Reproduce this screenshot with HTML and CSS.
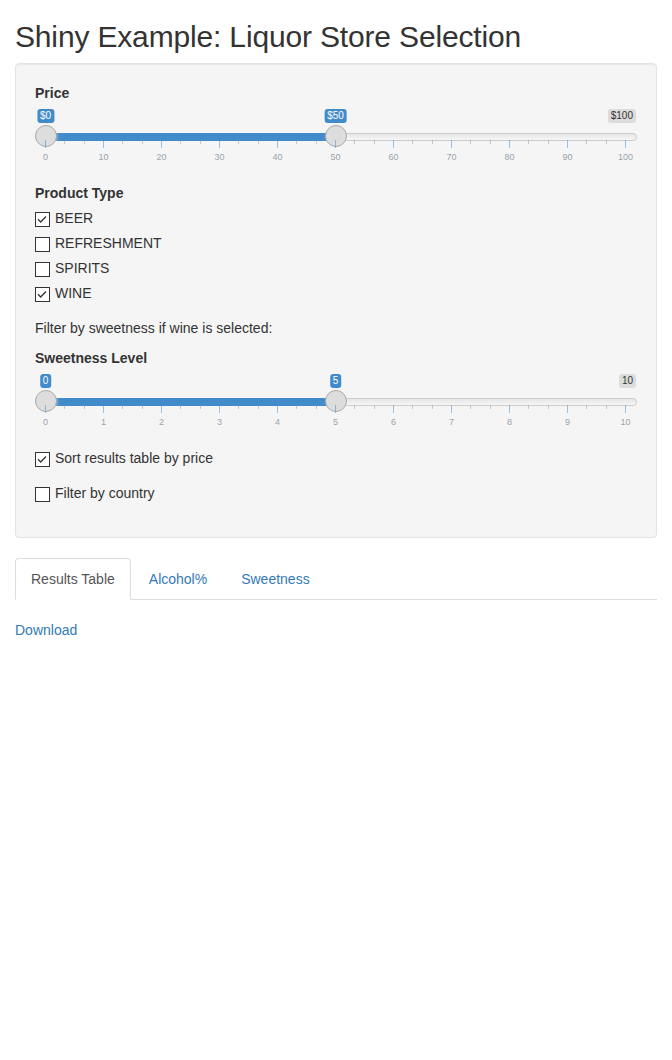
FILE: index.html
```html
<!DOCTYPE html>
<html>
<head>
<meta charset="utf-8">
<title>Shiny Example: Liquor Store Selection</title>
<link rel="stylesheet" href="styles.css">
</head>
<body>
<div class="container">
  <h2 class="title">Shiny Example: Liquor Store Selection</h2>

  <div class="well">
    <div class="form-group">
      <label class="control-label">Price</label>
      <div class="irs">
        <span class="irs-line"></span>
        <span class="irs-bar" style="width: calc((100% - 22px) * 0.5)"></span>
        <span class="irs-handle" style="left: 0"></span>
        <span class="irs-handle" style="left: calc((100% - 22px) * 0.5)"></span>
        <span class="irs-tag" style="left: calc(10.5px + (100% - 22px) * 0)">$0</span>
        <span class="irs-tag" style="left: calc(10.5px + (100% - 22px) * 0.5)">$50</span>
        <span class="irs-tag irs-max">$100</span>
        <div class="irs-grid">
          <div class="ticks">
            <i class="tick"></i><i class="tick s"></i><i class="tick s"></i>
            <i class="tick"></i><i class="tick s"></i><i class="tick s"></i>
            <i class="tick"></i><i class="tick s"></i><i class="tick s"></i>
            <i class="tick"></i><i class="tick s"></i><i class="tick s"></i>
            <i class="tick"></i><i class="tick s"></i><i class="tick s"></i>
            <i class="tick"></i><i class="tick s"></i><i class="tick s"></i>
            <i class="tick"></i><i class="tick s"></i><i class="tick s"></i>
            <i class="tick"></i><i class="tick s"></i><i class="tick s"></i>
            <i class="tick"></i><i class="tick s"></i><i class="tick s"></i>
            <i class="tick"></i><i class="tick s"></i><i class="tick s"></i>
            <i class="tick"></i>
          </div>
          <div class="nums">
            <span>0</span><span>10</span><span>20</span><span>30</span><span>40</span><span>50</span><span>60</span><span>70</span><span>80</span><span>90</span><span>100</span>
          </div>
        </div>
      </div>
    </div>

    <div class="form-group">
      <label class="control-label">Product Type</label>
      <div class="options">
        <div class="checkbox"><label><span class="box"><svg viewBox="0 0 13 13" width="13" height="13"><path d="M2 6.3 4.7 9 10 3.5"/></svg></span>BEER</label></div>
        <div class="checkbox"><label><span class="box"></span>REFRESHMENT</label></div>
        <div class="checkbox"><label><span class="box"></span>SPIRITS</label></div>
        <div class="checkbox"><label><span class="box"><svg viewBox="0 0 13 13" width="13" height="13"><path d="M2 6.3 4.7 9 10 3.5"/></svg></span>WINE</label></div>
      </div>
    </div>

    <div class="conditional">
      <p>Filter by sweetness if wine is selected:</p>
      <div class="form-group">
        <label class="control-label">Sweetness Level</label>
        <div class="irs">
          <span class="irs-line"></span>
          <span class="irs-bar" style="width: calc((100% - 22px) * 0.5)"></span>
          <span class="irs-handle" style="left: 0"></span>
          <span class="irs-handle" style="left: calc((100% - 22px) * 0.5)"></span>
          <span class="irs-tag" style="left: calc(10.5px + (100% - 22px) * 0)">0</span>
          <span class="irs-tag" style="left: calc(10.5px + (100% - 22px) * 0.5)">5</span>
          <span class="irs-tag irs-max">10</span>
          <div class="irs-grid">
            <div class="ticks">
              <i class="tick"></i><i class="tick s"></i><i class="tick s"></i>
              <i class="tick"></i><i class="tick s"></i><i class="tick s"></i>
              <i class="tick"></i><i class="tick s"></i><i class="tick s"></i>
              <i class="tick"></i><i class="tick s"></i><i class="tick s"></i>
              <i class="tick"></i><i class="tick s"></i><i class="tick s"></i>
              <i class="tick"></i><i class="tick s"></i><i class="tick s"></i>
              <i class="tick"></i><i class="tick s"></i><i class="tick s"></i>
              <i class="tick"></i><i class="tick s"></i><i class="tick s"></i>
              <i class="tick"></i><i class="tick s"></i><i class="tick s"></i>
              <i class="tick"></i><i class="tick s"></i><i class="tick s"></i>
              <i class="tick"></i>
            </div>
            <div class="nums">
              <span>0</span><span>1</span><span>2</span><span>3</span><span>4</span><span>5</span><span>6</span><span>7</span><span>8</span><span>9</span><span>10</span>
            </div>
          </div>
        </div>
      </div>
    </div>

    <div class="form-group">
      <div class="checkbox"><label><span class="box"><svg viewBox="0 0 13 13" width="13" height="13"><path d="M2 6.3 4.7 9 10 3.5"/></svg></span>Sort results table by price</label></div>
    </div>

    <div class="form-group">
      <div class="checkbox"><label><span class="box"></span>Filter by country</label></div>
    </div>
  </div>

  <ul class="nav-tabs">
    <li class="active"><a href="#">Results Table</a></li>
    <li><a href="#">Alcohol%</a></li>
    <li><a href="#">Sweetness</a></li>
  </ul>

  <div class="tab-content">
    <a class="download" href="#">Download</a>
  </div>
</div>
</body>
</html>
```

FILE: styles.css
```css
html, body {
  margin: 0;
  padding: 0;
  background: #fff;
}

body {
  font-family: "Liberation Sans", Arial, Helvetica, sans-serif;
  font-size: 14px;
  line-height: 20px;
  color: #333;
}

.container {
  padding: 0 15px;
}

.title {
  font-size: 30px;
  font-weight: 500;
  line-height: 1.1;
  margin: 20px 0 10px;
  color: #333;
  letter-spacing: -0.16px;
}

.well {
  margin-bottom: 20px;
  padding: 19px;
  background: #f5f5f5;
  border: 1px solid #e3e3e3;
  border-radius: 4px;
  box-shadow: inset 0 1px 1px rgba(0, 0, 0, 0.05);
}

.form-group {
  margin-bottom: 15px;
}

.control-label {
  display: block;
  font-weight: bold;
  margin-bottom: 5px;
}

p {
  margin: 0 0 10px;
}

/* checkboxes */
.checkbox {
  position: relative;
  margin: 10px 0;
}

.checkbox + .checkbox {
  margin-top: -5px;
}

.options .checkbox:first-child {
  margin-top: 0;
}

.checkbox label {
  display: block;
  position: relative;
  min-height: 20px;
  padding-left: 20px;
  font-weight: normal;
}

.box {
  position: absolute;
  left: 0;
  top: 4px;
  width: 15px;
  height: 15px;
  box-sizing: border-box;
  border: 1px solid #333;
  background: #fff;
}

.box svg {
  display: block;
}

.box path {
  fill: none;
  stroke: #333;
  stroke-width: 1.3;
}

/* range slider */
.irs {
  position: relative;
  height: 60px;
  font-family: "Liberation Sans", Arial, sans-serif;
}

.irs-line {
  position: absolute;
  left: 0;
  right: 0;
  top: 25px;
  height: 8px;
  box-sizing: border-box;
  border: 1px solid #ccc;
  border-radius: 16px;
  background: linear-gradient(to bottom, #ddd -50%, #fff 150%);
}

.irs-bar {
  position: absolute;
  left: 11px;
  top: 25px;
  height: 8px;
  background: #428bca;
}

.irs-handle {
  position: absolute;
  top: 17px;
  width: 22px;
  height: 22px;
  box-sizing: border-box;
  border: 1px solid #aaa;
  background: #ddd;
  border-radius: 50%;
  box-shadow: 1px 1px 3px rgba(255, 255, 255, 0.3);
}

.irs-tag {
  position: absolute;
  top: 1px;
  font-size: 10px;
  line-height: 12px;
  padding: 1px 3px;
  border-radius: 3px;
  transform: translateX(-50%);
  color: #fff;
  background: #428bca;
  white-space: nowrap;
}

.irs-tag.irs-max {
  left: auto;
  right: 1px;
  transform: none;
  color: #333;
  background: rgba(0, 0, 0, 0.1);
}

.irs-grid {
  position: absolute;
  top: 32px;
  left: 10px;
  right: 11px;
}

.ticks {
  display: flex;
  justify-content: space-between;
  align-items: flex-start;
  height: 8px;
}

.tick {
  display: block;
  width: 1px;
  height: 8px;
  background: #428bca;
  opacity: 0.5;
}

.tick.s {
  height: 4px;
  background: #999;
}

.nums {
  display: flex;
  justify-content: space-between;
  margin-top: 5px;
  font-size: 9px;
  line-height: 9px;
  color: #99a4ac;
}

.nums span {
  width: 1px;
  display: flex;
  justify-content: center;
  white-space: nowrap;
}

/* tabs */
.nav-tabs {
  display: flex;
  margin: 0;
  padding: 0;
  list-style: none;
  border-bottom: 1px solid #ddd;
}

.nav-tabs li {
  margin-bottom: -1px;
}

.nav-tabs a {
  display: block;
  padding: 10px 15px;
  line-height: 20px;
  margin-right: 2px;
  border: 1px solid transparent;
  border-radius: 4px 4px 0 0;
  color: #337ab7;
  text-decoration: none;
}

.nav-tabs li.active a {
  color: #555;
  background: #fff;
  border-color: #ddd;
  border-bottom-color: transparent;
}

.tab-content {
  padding-top: 20px;
}

.download {
  color: #337ab7;
  text-decoration: none;
}
```
